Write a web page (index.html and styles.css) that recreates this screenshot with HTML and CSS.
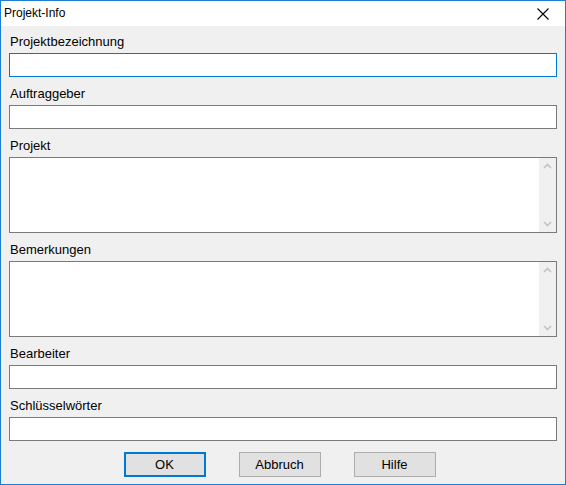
FILE: index.html
```html
<!DOCTYPE html>
<html lang="de">
<head>
<meta charset="utf-8">
<title>Projekt-Info</title>
<link rel="stylesheet" href="styles.css">
</head>
<body>
<div class="window">
  <div class="titlebar">
    <span class="title">Projekt-Info</span>
    <button class="close" aria-label="Schließen">
      <svg width="12" height="12" viewBox="0 0 12 12"><path d="M0.5 0.5 L11.5 11.5 M11.5 0.5 L0.5 11.5" stroke="#000" stroke-width="1.1" fill="none"/></svg>
    </button>
  </div>
  <div class="content">
    <div class="field">
      <label class="label">Projektbezeichnung</label>
      <div class="input focused"></div>
    </div>
    <div class="field">
      <label class="label">Auftraggeber</label>
      <div class="input"></div>
    </div>
    <div class="field">
      <label class="label">Projekt</label>
      <div class="memo">
        <div class="memo-text"></div>
        <div class="vscroll">
          <svg class="arrow" width="17" height="17" viewBox="0 0 17 17"><path d="M5 10 L8.5 6.5 L12 10" stroke="#c2c2c2" stroke-width="1.6" fill="none"/></svg>
          <svg class="arrow" width="17" height="17" viewBox="0 0 17 17"><path d="M5 7 L8.5 10.5 L12 7" stroke="#c2c2c2" stroke-width="1.6" fill="none"/></svg>
        </div>
      </div>
    </div>
    <div class="field">
      <label class="label">Bemerkungen</label>
      <div class="memo">
        <div class="memo-text"></div>
        <div class="vscroll">
          <svg class="arrow" width="17" height="17" viewBox="0 0 17 17"><path d="M5 10 L8.5 6.5 L12 10" stroke="#c2c2c2" stroke-width="1.6" fill="none"/></svg>
          <svg class="arrow" width="17" height="17" viewBox="0 0 17 17"><path d="M5 7 L8.5 10.5 L12 7" stroke="#c2c2c2" stroke-width="1.6" fill="none"/></svg>
        </div>
      </div>
    </div>
    <div class="field">
      <label class="label">Bearbeiter</label>
      <div class="input"></div>
    </div>
    <div class="field">
      <label class="label">Schlüsselwörter</label>
      <div class="input"></div>
    </div>
    <div class="buttons">
      <button class="btn default">OK</button>
      <button class="btn">Abbruch</button>
      <button class="btn">Hilfe</button>
    </div>
  </div>
</div>
</body>
</html>
```
FILE: styles.css
```css
* {
  box-sizing: border-box;
}

html, body {
  margin: 0;
  padding: 0;
  background: #ffffff;
}

body {
  font-family: "Liberation Sans", Arial, sans-serif;
  font-size: 13px;
  color: #000;
}

.window {
  width: 566px;
  height: 485px;
  border: 1px solid #1a7fd4;
  background: #f0f0f0;
  display: flex;
  flex-direction: column;
}

.titlebar {
  height: 25px;
  background: #ffffff;
  display: flex;
  align-items: center;
  justify-content: space-between;
  padding-left: 3px;
}

.title {
  font-size: 12px;
  padding-bottom: 1px;
}

.close {
  width: 32px;
  height: 25px;
  border: 0;
  background: transparent;
  padding: 0;
  margin-right: 6px;
  display: flex;
  align-items: center;
  justify-content: center;
}

.content {
  flex: 1;
  padding: 7px 8px 0 8px;
  display: flex;
  flex-direction: column;
}

.field {
  display: flex;
  flex-direction: column;
  margin-bottom: 8px;
}

.label {
  display: block;
  height: 17px;
  line-height: 18px;
  margin-bottom: 3px;
  padding-left: 1px;
}

.input {
  height: 24px;
  background: #fff;
  border: 1px solid #7a7a7a;
}

.input.focused {
  border-color: #0078d7;
}

.memo {
  height: 76px;
  background: #fff;
  border: 1px solid #7a7a7a;
  display: flex;
}

.memo-text {
  flex: 1;
}

.vscroll {
  width: 17px;
  background: #f0f0f0;
  display: flex;
  flex-direction: column;
  justify-content: space-between;
}

.arrow {
  display: block;
}

.buttons {
  display: flex;
  justify-content: center;
  gap: 33px;
  padding-right: 7px;
  margin-top: 3px;
}

.btn {
  width: 82px;
  height: 25px;
  background: #e1e1e1;
  border: 1px solid #adadad;
  font-family: "Liberation Sans", Arial, sans-serif;
  font-size: 13px;
  color: #000;
  padding: 0;
}

.btn.default {
  border: 2px solid #0078d7;
}
```
